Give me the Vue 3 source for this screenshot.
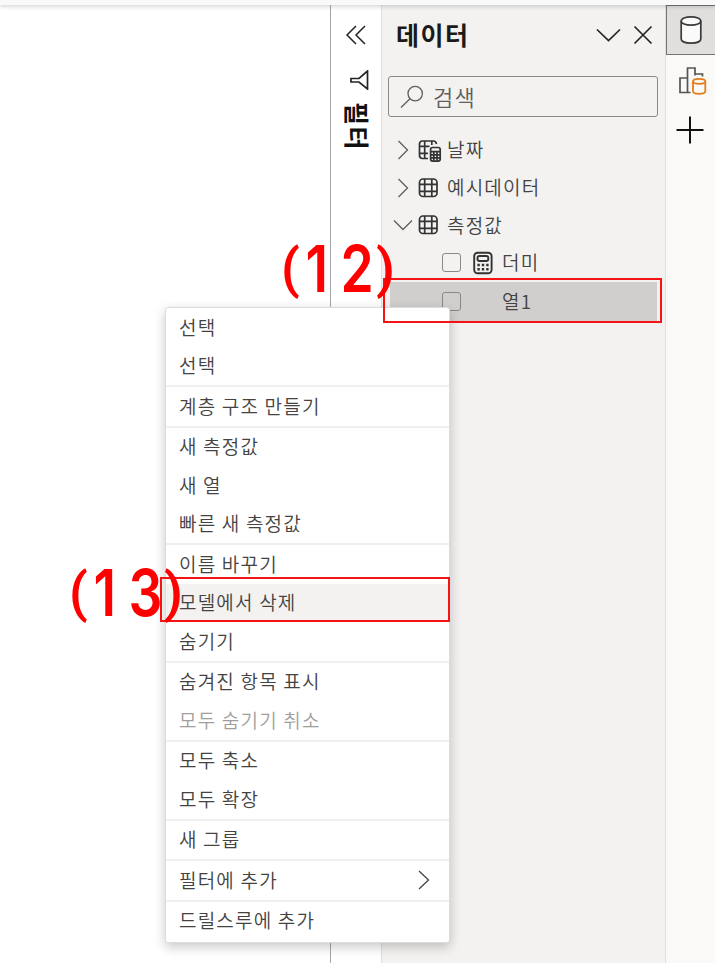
<template>
  <div class="screen">
    <div class="top-strip"></div>
    <div class="workspace">
      <main class="canvas"></main>

      <aside class="filter-pane">
        <svg class="collapse-icon" width="22" height="22" viewBox="0 0 22 22">
          <path d="M11 2 L2 11 L11 20 M20 2 L11 11 L20 20" />
        </svg>
        <svg class="funnel-icon" width="20" height="20" viewBox="0 0 20 20">
          <path d="M17.5 1 V19 L9 12 H1 V8.5 H9 Z" />
        </svg>
        <span class="filter-title">필터</span>
      </aside>

      <section class="data-pane">
        <header class="pane-header">
          <h1>데이터</h1>
          <svg class="header-icon" width="25" height="20" viewBox="0 0 25 20">
            <path d="M1 4.5 L12.5 15.5 L24 4.5" />
          </svg>
          <svg class="header-icon" width="20" height="20" viewBox="0 0 20 20">
            <path d="M1.5 1.5 L18.5 18.5 M18.5 1.5 L1.5 18.5" />
          </svg>
        </header>

        <div class="search">
          <svg width="24" height="24" viewBox="0 0 24 24">
            <circle cx="15.2" cy="8.6" r="7.2" />
            <path d="M10 13.8 L1 22.5" />
          </svg>
          <span>검색</span>
        </div>

        <div class="tree">
          <div v-for="table in tables" :key="table.name" class="tree-row">
            <svg class="chevron" width="20" height="20" viewBox="0 0 20 20">
              <path :d="table.open ? 'M1 5.5 L10 14.5 L19 5.5' : 'M5.5 1 L14.5 10 L5.5 19'" />
            </svg>
            <svg v-if="table.calculated" class="table-icon" width="24" height="24" viewBox="0 0 24 24">
              <path d="M10 20.5 H4.5 Q1.5 20.5 1.5 17.5 V6 Q1.5 3 4.5 3 H15.5 Q18 3 18.5 6 M1.5 8.3 H11.5 M1.5 15.3 H10 M6.7 3 V20.5 M13.8 3 V7" />
              <rect x="12.6" y="9.5" width="9.6" height="13.6" rx="2" />
              <path d="M12.6 13.7 H22.2 M12.6 16.8 H22.2 M12.6 19.9 H22.2 M15.8 13.7 V23 M19 13.7 V23" />
            </svg>
            <svg v-else class="table-icon" width="24" height="24" viewBox="0 0 24 24">
              <rect x="1.5" y="3" width="17.5" height="17.5" rx="3.5" />
              <path d="M6.7 3 V20.5 M13.8 3 V20.5 M1.5 8.3 H19 M1.5 15.3 H19" />
            </svg>
            <span>{{ table.name }}</span>
          </div>

          <div
            v-for="field in fields"
            :key="field.name"
            class="tree-row field"
            :class="{ selected: field.selected }"
          >
            <i class="checkbox"></i>
            <svg class="measure-icon" width="20" height="24" viewBox="0 0 20 24">
              <template v-if="field.measure">
                <rect x="1.2" y="1.7" width="17.4" height="20.6" rx="3.5" />
                <rect x="4.5" y="5" width="10.8" height="5" rx="2" />
                <path class="keys" d="M4.4 14 h2.4 M8.8 14 h2.4 M13.2 14 h2.4 M4.4 18.3 h2.4 M8.8 18.3 h2.4 M13.2 18.3 h2.4" />
              </template>
            </svg>
            <span>{{ field.name }}</span>
          </div>
        </div>
      </section>

      <nav class="rail">
        <div class="rail-tab active">
          <svg width="24" height="30" viewBox="0 0 24 30">
            <path class="cylinder" d="M2.2 6 V24 C2.2 29.5 21.8 29.5 21.8 24 V6" />
            <ellipse class="cylinder" cx="12" cy="6" rx="9.8" ry="4.2" />
          </svg>
        </div>
        <div class="rail-tab visual">
          <svg width="30" height="32" viewBox="0 0 30 32">
            <path class="bars" d="M12.5 28.5 H2 V14 H9.5 M9.5 28.5 V4 H17 V11.5 M17 10 H24.5 V12.5" />
            <path class="orange" d="M15 17.5 V27.3 C15 30.6 27.3 30.6 27.3 27.3 V17.5" />
            <ellipse class="orange" cx="21.15" cy="17.3" rx="6.15" ry="2.5" />
          </svg>
        </div>
        <div class="rail-tab add">
          <svg width="28" height="28" viewBox="0 0 28 28">
            <path class="plus" d="M14 0.5 V27.5 M0.5 14 H27.5" />
          </svg>
        </div>
      </nav>
    </div>

    <ul class="context-menu">
      <template v-for="(group, g) in menu" :key="g">
        <li v-if="g > 0" class="separator"></li>
        <li
          v-for="(item, i) in group"
          :key="i"
          class="menu-item"
          :class="{ disabled: item.disabled, hovered: item.hovered }"
        >
          <span>{{ item.label }}</span>
          <svg v-if="item.submenu" width="14" height="20" viewBox="0 0 14 20">
            <path d="M2 1 L11.5 10 L2 19" />
          </svg>
        </li>
      </template>
    </ul>

    <div class="mark-box column-box"></div>
    <div class="mark-box delete-box"></div>
    <div class="mark mark-12"><span>(</span><b>1</b><b>2</b><span>)</span></div>
    <div class="mark mark-13"><span>(</span><b>1</b><b>3</b><span>)</span></div>
  </div>
</template>

<script setup>
const tables = [
  { name: "날짜", calculated: true },
  { name: "예시데이터" },
  { name: "측정값", open: true },
];

const fields = [
  { name: "더미", measure: true },
  { name: "열1", selected: true },
];

const menu = [
  [{ label: "선택" }, { label: "선택" }],
  [{ label: "계층 구조 만들기" }],
  [{ label: "새 측정값" }, { label: "새 열" }, { label: "빠른 새 측정값" }],
  [
    { label: "이름 바꾸기" },
    { label: "모델에서 삭제", hovered: true },
    { label: "숨기기" },
  ],
  [{ label: "숨겨진 항목 표시" }, { label: "모두 숨기기 취소", disabled: true }],
  [{ label: "모두 축소" }, { label: "모두 확장" }],
  [{ label: "새 그룹" }],
  [{ label: "필터에 추가", submenu: true }],
  [{ label: "드릴스루에 추가" }],
];
</script>

<style>
body {
  margin: 0;
  background: #fff;
}
</style>

<style scoped>
.screen {
  position: relative;
  display: flex;
  flex-direction: column;
  width: 715px;
  height: 963px;
  overflow: hidden;
  background: #fff;
  color: #444342;
  font-family: "Noto Sans CJK KR", sans-serif;
  font-size: 19px;
  font-weight: 350;
  letter-spacing: 1.2px;
}

svg {
  display: block;
  flex: none;
  fill: none;
  stroke: #444;
  stroke-width: 1.3;
}

.top-strip {
  position: relative;
  flex: none;
  height: 5px;
  background: #f9f9f9;
  box-shadow: 0 1px 5px rgba(0, 0, 0, 0.22);
}

.workspace {
  display: flex;
  flex: 1;
}

.canvas {
  width: 330px;
}

/* Collapsed filter pane */
.filter-pane {
  box-sizing: border-box;
  width: 52px;
  padding-top: 19px;
  border-left: 1px solid #a8a6a4;
  border-right: 1px solid #e1dfdd;
  display: flex;
  flex-direction: column;
  align-items: center;
}

.collapse-icon {
  stroke: #252423;
  stroke-width: 1.5;
}

.funnel-icon {
  margin: 24px 0 0 7px;
  stroke: #252423;
  stroke-width: 1.7;
}

.filter-title {
  margin: 12px 0 0 4px;
  writing-mode: vertical-rl;
  text-orientation: sideways;
  font-size: 25px;
  line-height: 28px;
  font-weight: 700;
  letter-spacing: 1.6px;
  color: #111;
}

/* Data pane */
.data-pane {
  box-sizing: border-box;
  width: 284px;
  background: #f3f2f1;
  border-right: 1px solid #e1dfdd;
}

.pane-header {
  display: flex;
  align-items: center;
  height: 60px;
  padding: 0 12px 0 14px;
}

.pane-header h1 {
  flex: 1;
  margin: 0;
  padding-bottom: 3px;
  font-size: 25px;
  line-height: 36px;
  font-weight: 700;
  letter-spacing: 1.5px;
  color: #1b1a19;
}

.header-icon {
  margin-left: 12px;
  stroke: #252423;
  stroke-width: 1.7;
}

.search {
  box-sizing: border-box;
  display: flex;
  align-items: center;
  gap: 9px;
  height: 41px;
  margin: 11px 7px 0 6px;
  padding-left: 11px;
  border: 1px solid #8a8886;
  border-radius: 3px;
  font-size: 22px;
  color: #605e5c;
}

.search span {
  padding-bottom: 2px;
}

.search svg {
  stroke: #605e5c;
}

.tree {
  padding-top: 14px;
}

.tree-row {
  box-sizing: border-box;
  display: flex;
  align-items: center;
  height: 37.7px;
  padding-left: 11px;
}

.tree-row span,
.menu-item span {
  padding-bottom: 2px;
}

.chevron {
  margin-right: 5px;
  stroke: #605e5c;
}

.table-icon {
  margin-right: 5px;
  stroke: #333;
  stroke-width: 1.7;
}

.field {
  margin: 0 8px;
  padding-left: 52px;
}

.field.selected {
  background: #d0cfcd;
  height: 39px;
}

.checkbox {
  box-sizing: border-box;
  width: 19px;
  height: 19px;
  margin-right: 12px;
  border: 1px solid #8a8886;
  border-radius: 3px;
}

.measure-icon {
  margin-right: 9px;
  stroke: #333;
  stroke-width: 1.9;
}

.measure-icon .keys {
  stroke-width: 2.4;
}

/* Right rail */
.rail {
  width: 49px;
  background: #faf9f8;
}

.rail-tab {
  box-sizing: border-box;
  display: flex;
  align-items: center;
  justify-content: center;
  height: 49px;
}

.rail-tab.active {
  height: 50px;
  border: 1px solid #777573;
  border-right: 0;
  background: #e1dfdd;
}

.rail-tab.visual {
  padding-left: 4px;
}

.rail-tab.add {
  height: 51px;
  padding-right: 2px;
}

.cylinder {
  fill: #fafafa;
  stroke: #3b3a39;
  stroke-width: 1.7;
}

.bars {
  stroke: #555;
  stroke-width: 1.7;
}

.orange {
  fill: #faf9f8;
  stroke: #e57c18;
  stroke-width: 1.8;
}

.plus {
  stroke: #111;
  stroke-width: 2;
}

/* Context menu over the panes */
.context-menu {
  position: absolute;
  left: 165px;
  top: 307px;
  box-sizing: border-box;
  width: 285px;
  height: 636px;
  margin: 0;
  padding: 0;
  border: 1px solid #dcdcdc;
  border-radius: 3px;
  background: #fff;
  box-shadow: 0 4px 12px rgba(0, 0, 0, 0.22);
  list-style: none;
}

.menu-item {
  box-sizing: border-box;
  display: flex;
  align-items: center;
  justify-content: space-between;
  height: 38.5px;
  padding: 0 18px 0 13px;
}

.menu-item.hovered {
  background: #f3f2f1;
}

.menu-item.disabled {
  color: #a19f9d;
}

.separator {
  height: 2px;
  background: #f0efee;
}

/* Red step marks */
.mark-box {
  position: absolute;
  box-sizing: border-box;
  border: 2px solid #f51414;
}

.column-box {
  left: 383px;
  top: 278px;
  width: 279px;
  height: 45px;
}

.delete-box {
  left: 160px;
  top: 577px;
  width: 290px;
  height: 45px;
}

.mark {
  position: absolute;
  display: flex;
  color: #f00;
  font-family: Inter, sans-serif;
  font-size: 65px;
  line-height: 66px;
  letter-spacing: 0;
}

.mark b {
  width: 39.5px;
  font-weight: 600;
  text-align: center;
  transform: scaleX(0.82);
}

.mark span {
  width: 16px;
  font-family: Roboto, sans-serif;
  font-size: 54px;
  font-weight: 600;
}

.mark-12 {
  left: 281px;
  top: 236px;
}

.mark-13 {
  left: 69px;
  top: 560px;
}
</style>
